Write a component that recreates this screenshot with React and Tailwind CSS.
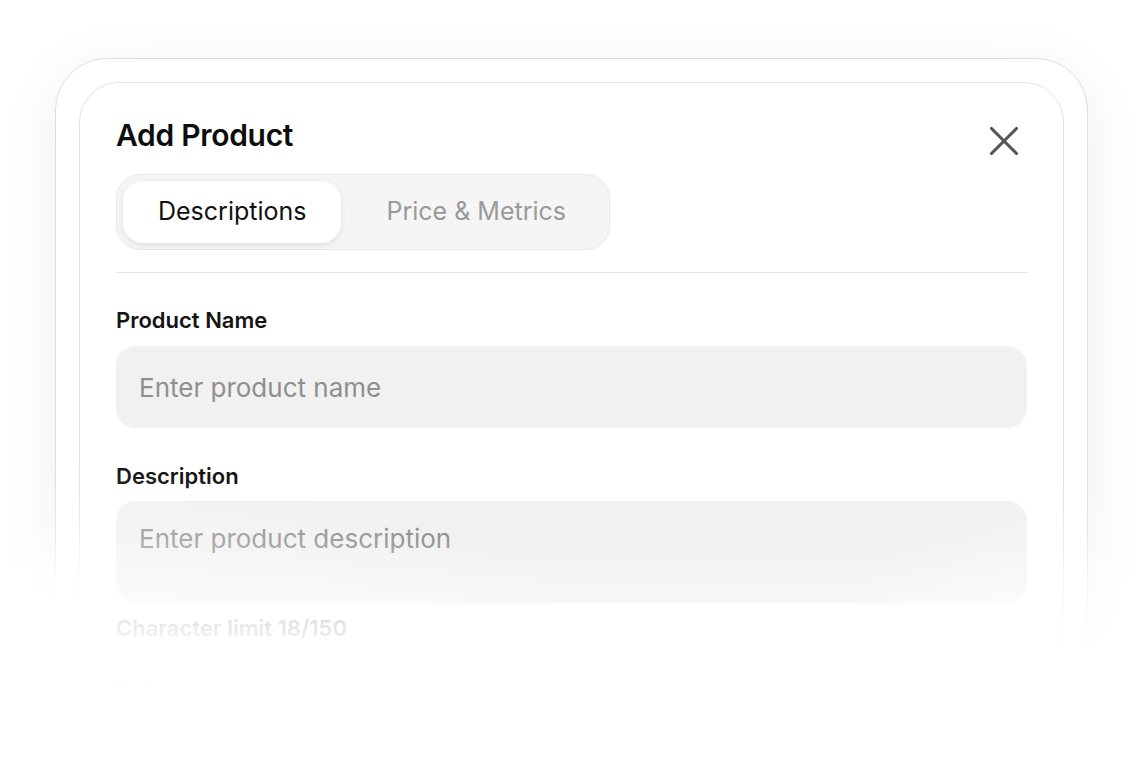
import { X } from "lucide-react";

const Radio = ({ label }) => (
  <div className="flex items-center gap-[18px]">
    <span className="w-[30px] h-[30px] rounded-full border-2 border-[#d4d4d4]" />
    <span className="text-[25px] text-[#999]">{label}</span>
  </div>
);

const App = () => {
  return (
    <div className="relative w-[1143px] h-[784px] overflow-hidden bg-white font-['Inter','Liberation_Sans',sans-serif]">
      {/* Outer frame */}
      <div className="pt-[58px] pl-[55px]">
        <div className="w-[1033px] h-[800px] rounded-[52px] border border-[#dedede] bg-white p-[23px] shadow-[0_12px_60px_rgba(0,0,0,0.07)]">
          {/* Modal */}
          <div className="h-full rounded-[40px] border border-[#e3e3e3] bg-white px-[36px] pt-[34px]">
            <div className="flex items-start justify-between h-[36px]">
              <h1 className="text-[30px] leading-[36px] font-semibold tracking-[-0.3px] text-[#0d0d0d]">
                Add Product
              </h1>
              <X className="w-[50px] h-[50px] -mr-[2px] -mt-[1px] text-[#555] shrink-0" strokeWidth={1.5} />
            </div>

            {/* Tabs */}
            <div className="mt-[21px] inline-flex gap-2 rounded-[24px] border border-[#e8e8e8] bg-[#f5f5f5] p-[6px]">
              <div className="px-[35px] h-[62px] flex items-center rounded-[20px] bg-white shadow-[0_2px_6px_rgba(0,0,0,0.09)] text-[25px] text-[#111]">
                Descriptions
              </div>
              <div className="px-[37px] h-[62px] flex items-center text-[25px] text-[#9a9a9a]">
                Price &amp; Metrics
              </div>
            </div>

            <div className="mt-[22px] h-px bg-[#e4e4e4]" />

            {/* Product name */}
            <div className="mt-[35px] text-[22px] leading-[24px] font-semibold text-[#141414]">
              Product Name
            </div>
            <div className="mt-[14px] h-[82px] rounded-[20px] bg-[#f1f1f1] flex items-center px-[23px] text-[26px] text-[#8f8f8f]">
              Enter product name
            </div>

            {/* Description */}
            <div className="mt-[36px] text-[22px] leading-[24px] font-semibold text-[#141414]">
              Description
            </div>
            <div className="mt-[13px] h-[102px] rounded-[20px] bg-[#f1f1f1] px-[23px] pt-[22px] text-[26px] leading-[32px] text-[#8f8f8f]">
              Enter product description
            </div>
            <div className="mt-[13px] text-[22px] leading-[24px] font-semibold text-[#8a8a8a]">
              Character limit 18/150
            </div>

            {/* Type */}
            <div className="mt-[38px] text-[22px] leading-[24px] font-semibold text-[#141414]">
              Type
            </div>
            <div className="mt-[24px] flex items-center gap-[27px] pl-[52px]">
              <Radio label="Goods (default)" />
              <Radio label="Service" />
            </div>
          </div>
        </div>
      </div>

      {/* Bottom fade */}
      <div className="absolute left-0 right-0 top-[540px] bottom-0 bg-[linear-gradient(to_bottom,rgba(255,255,255,0)_0%,rgba(255,255,255,0.5)_30%,rgba(255,255,255,0.9)_48%,#fff_62%)]" />
      <div className="absolute left-0 top-[460px] bottom-0 w-[760px] bg-[radial-gradient(ellipse_at_0%_100%,#fff_0%,rgba(255,255,255,0.6)_35%,rgba(255,255,255,0)_70%)]" />
      <div className="absolute right-0 top-[480px] bottom-0 w-[400px] bg-[radial-gradient(ellipse_at_100%_100%,#fff_0%,rgba(255,255,255,0.7)_40%,rgba(255,255,255,0)_70%)]" />
      <div className="absolute left-0 top-[520px] bottom-0 w-[110px] bg-[linear-gradient(to_bottom,rgba(255,255,255,0)_0px,rgba(255,255,255,0.7)_60px,#fff_95px)]" />
    </div>
  );
};

export default App;
